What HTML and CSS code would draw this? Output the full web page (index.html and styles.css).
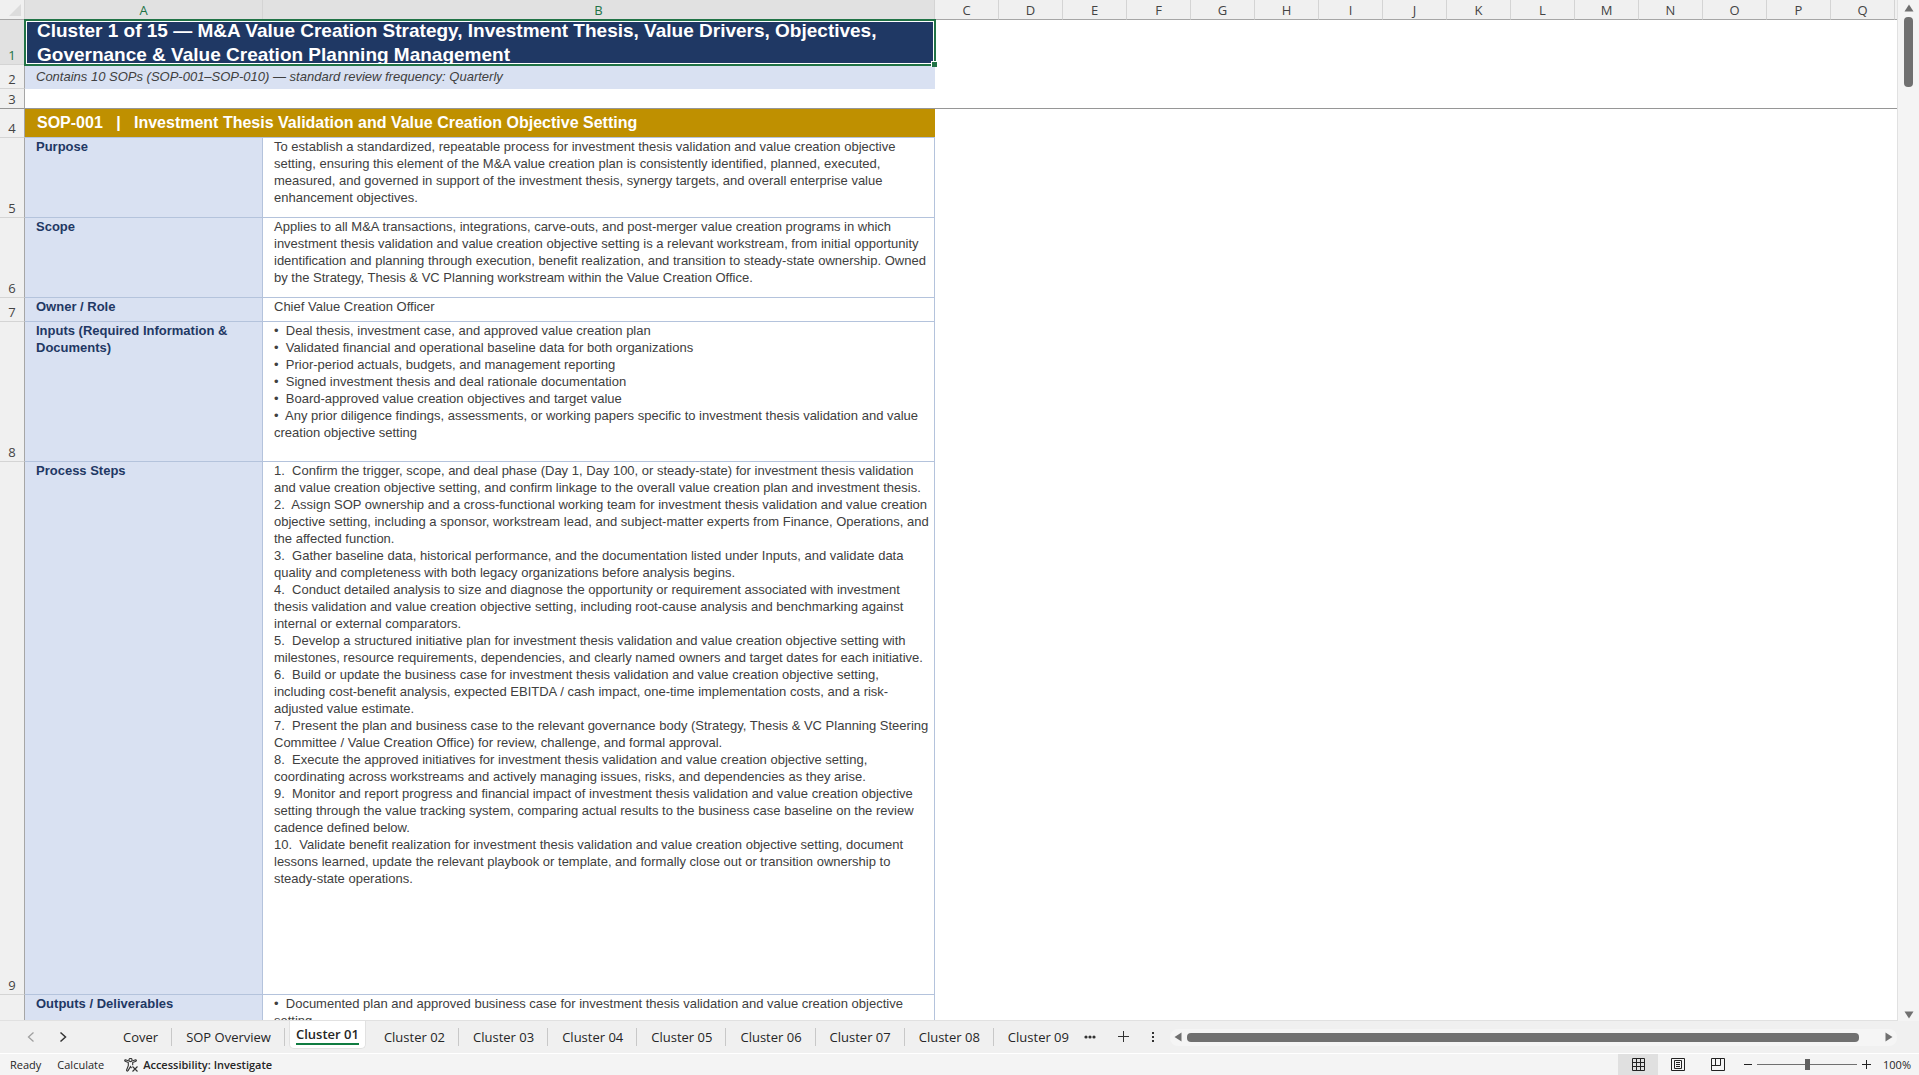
FILE: index.html
```
<!DOCTYPE html>
<html lang="en">
<head>
    <meta charset="UTF-8">
    <meta name="viewport" content="width=device-width, initial-scale=1.0">
    <title>Cluster 01</title>
    <link rel="stylesheet" href="styles.css">
</head>
<body>
    <main class="workspace">
        <div class="sheet">
            <table>
                <colgroup>
                    <col class="col-rownum">
                    <col class="col-a">
                    <col class="col-b">
                    <col class="col-std" span="15">
                    <col>
                </colgroup>
                <thead>
                    <tr>
                        <th class="corner"><svg width="12" height="12" viewBox="0 0 12 12"><path d="M12 0v12H0z" fill="#dcdcdc"/></svg></th>
                        <th class="active">A</th>
                        <th class="active">B</th>
                        <th>C</th>
                        <th>D</th>
                        <th>E</th>
                        <th>F</th>
                        <th>G</th>
                        <th>H</th>
                        <th>I</th>
                        <th>J</th>
                        <th>K</th>
                        <th>L</th>
                        <th>M</th>
                        <th>N</th>
                        <th>O</th>
                        <th>P</th>
                        <th>Q</th>
                        <th class="last"></th>
                    </tr>
                </thead>
                <tbody>
                    <tr class="row-title">
                        <th class="active">1</th>
                        <td colspan="2" class="title">
                            <div class="clip">Cluster 1 of 15 — M&amp;A Value Creation Strategy, Investment Thesis, Value Drivers, Objectives, Governance &amp; Value Creation Planning Management</div>
                            <span class="handle"></span>
                        </td>
                        <td colspan="16"></td>
                    </tr>
                    <tr class="row-subtitle">
                        <th>2</th>
                        <td colspan="2" class="subtitle">Contains 10 SOPs (SOP-001–SOP-010) — standard review frequency: Quarterly</td>
                        <td colspan="16"></td>
                    </tr>
                    <tr class="row-blank frozen">
                        <th>3</th>
                        <td colspan="18"></td>
                    </tr>
                    <tr class="row-sop">
                        <th>4</th>
                        <td colspan="2" class="sop">SOP-001 &nbsp; | &nbsp; Investment Thesis Validation and Value Creation Objective Setting</td>
                        <td colspan="16"></td>
                    </tr>
                    <tr class="row-text">
                        <th>5</th>
                        <td class="label">Purpose</td>
                        <td class="text">To establish a standardized, repeatable process for investment thesis validation and value creation objective setting, ensuring this element of the M&amp;A value creation plan is consistently identified, planned, executed, measured, and governed in support of the investment thesis, synergy targets, and overall enterprise value enhancement objectives.</td>
                        <td colspan="16"></td>
                    </tr>
                    <tr class="row-text">
                        <th>6</th>
                        <td class="label">Scope</td>
                        <td class="text">Applies to all M&amp;A transactions, integrations, carve-outs, and post-merger value creation programs in which investment thesis validation and value creation objective setting is a relevant workstream, from initial opportunity identification and planning through execution, benefit realization, and transition to steady-state ownership. Owned by the Strategy, Thesis &amp; VC Planning workstream within the Value Creation Office.</td>
                        <td colspan="16"></td>
                    </tr>
                    <tr class="row-single">
                        <th>7</th>
                        <td class="label">Owner / Role</td>
                        <td class="text">Chief Value Creation Officer</td>
                        <td colspan="16"></td>
                    </tr>
                    <tr class="row-inputs">
                        <th>8</th>
                        <td class="label">Inputs (Required Information &amp; Documents)</td>
                        <td class="text">
                            <p>•&nbsp; Deal thesis, investment case, and approved value creation plan</p>
                            <p>•&nbsp; Validated financial and operational baseline data for both organizations</p>
                            <p>•&nbsp; Prior-period actuals, budgets, and management reporting</p>
                            <p>•&nbsp; Signed investment thesis and deal rationale documentation</p>
                            <p>•&nbsp; Board-approved value creation objectives and target value</p>
                            <p>•&nbsp; Any prior diligence findings, assessments, or working papers specific to investment thesis validation and value creation objective setting</p>
                        </td>
                        <td colspan="16"></td>
                    </tr>
                    <tr class="row-steps">
                        <th>9</th>
                        <td class="label">Process Steps</td>
                        <td class="text">
                            <p>1.&nbsp; Confirm the trigger, scope, and deal phase (Day 1, Day 100, or steady-state) for investment thesis validation and value creation objective setting, and confirm linkage to the overall value creation plan and investment thesis.</p>
                            <p>2.&nbsp; Assign SOP ownership and a cross-functional working team for investment thesis validation and value creation objective setting, including a sponsor, workstream lead, and subject-matter experts from Finance, Operations, and the affected function.</p>
                            <p>3.&nbsp; Gather baseline data, historical performance, and the documentation listed under Inputs, and validate data quality and completeness with both legacy organizations before analysis begins.</p>
                            <p>4.&nbsp; Conduct detailed analysis to size and diagnose the opportunity or requirement associated with investment thesis validation and value creation objective setting, including root-cause analysis and benchmarking against internal or external comparators.</p>
                            <p>5.&nbsp; Develop a structured initiative plan for investment thesis validation and value creation objective setting with milestones, resource requirements, dependencies, and clearly named owners and target dates for each initiative.</p>
                            <p>6.&nbsp; Build or update the business case for investment thesis validation and value creation objective setting, including cost-benefit analysis, expected EBITDA / cash impact, one-time implementation costs, and a risk-adjusted value estimate.</p>
                            <p>7.&nbsp; Present the plan and business case to the relevant governance body (Strategy, Thesis &amp; VC Planning Steering Committee / Value Creation Office) for review, challenge, and formal approval.</p>
                            <p>8.&nbsp; Execute the approved initiatives for investment thesis validation and value creation objective setting, coordinating across workstreams and actively managing issues, risks, and dependencies as they arise.</p>
                            <p>9.&nbsp; Monitor and report progress and financial impact of investment thesis validation and value creation objective setting through the value tracking system, comparing actual results to the business case baseline on the review cadence defined below.</p>
                            <p>10.&nbsp; Validate benefit realization for investment thesis validation and value creation objective setting, document lessons learned, update the relevant playbook or template, and formally close out or transition ownership to steady-state operations.</p>
                        </td>
                        <td colspan="16"></td>
                    </tr>
                    <tr class="row-outputs">
                        <th></th>
                        <td class="label">Outputs / Deliverables</td>
                        <td class="text">
                            <p>•&nbsp; Documented plan and approved business case for investment thesis validation and value creation objective setting</p>
                        </td>
                        <td colspan="16"></td>
                    </tr>
                </tbody>
            </table>
        </div>
        <div class="vscroll">
            <button aria-label="Scroll up"><svg width="10" height="8" viewBox="0 0 10 8"><path d="M5 0.5L9.5 7.5H0.5z" fill="#707070"/></svg></button>
            <div class="vtrack"><div class="vthumb"></div></div>
            <button aria-label="Scroll down"><svg width="10" height="8" viewBox="0 0 10 8"><path d="M0.5 0.5h9L5 7.5z" fill="#707070"/></svg></button>
        </div>
    </main>

    <nav class="tabbar">
        <div class="tab-arrows">
            <button aria-label="Previous sheet"><svg width="8" height="12" viewBox="0 0 8 12"><path d="M6.5 1.5L1.5 6l5 4.5" fill="none" stroke="#a0a0a0" stroke-width="1.3"/></svg></button>
            <button aria-label="Next sheet"><svg width="8" height="12" viewBox="0 0 8 12"><path d="M1.5 1.5l5 4.5-5 4.5" fill="none" stroke="#333" stroke-width="1.5"/></svg></button>
        </div>
        <div class="tabs">
            <button class="tab">Cover</button>
            <button class="tab">SOP Overview</button>
            <button class="tab current"><span>Cluster 01</span></button>
            <button class="tab">Cluster 02</button>
            <button class="tab">Cluster 03</button>
            <button class="tab">Cluster 04</button>
            <button class="tab">Cluster 05</button>
            <button class="tab">Cluster 06</button>
            <button class="tab">Cluster 07</button>
            <button class="tab">Cluster 08</button>
            <button class="tab">Cluster 09</button>
        </div>
        <div class="tab-tools">
            <button aria-label="More sheets"><svg width="12" height="4" viewBox="0 0 12 4"><g fill="#333"><circle cx="2" cy="2" r="1.6"/><circle cx="6" cy="2" r="1.6"/><circle cx="10" cy="2" r="1.6"/></g></svg></button>
            <button aria-label="New sheet"><svg width="12" height="12" viewBox="0 0 12 12"><path d="M5.5 0v11M0 5.5h11" stroke="#333" stroke-width="1"/></svg></button>
            <button aria-label="Resize"><svg width="2" height="10" viewBox="0 0 2 10"><path d="M0 0h2v2H0zM0 4h2v2H0zM0 8h2v2H0z" fill="#333"/></svg></button>
        </div>
        <div class="hscroll">
            <button aria-label="Scroll left"><svg width="8" height="10" viewBox="0 0 8 10"><path d="M7.5 0.5v9L0.5 5z" fill="#707070"/></svg></button>
            <div class="htrack"><div class="hthumb"></div></div>
            <button aria-label="Scroll right"><svg width="8" height="10" viewBox="0 0 8 10"><path d="M0.5 0.5v9L7.5 5z" fill="#707070"/></svg></button>
        </div>
    </nav>

    <footer class="statusbar">
        <span>Ready</span>
        <span>Calculate</span>
        <button class="access">
            <svg width="15" height="14" viewBox="0 0 15 14" fill="none" stroke="#333" stroke-width="1.1"><circle cx="6.5" cy="2" r="1.6"/><path d="M4.8 3L1.5 1.8C.6 1.7.4 2.9 1.2 3.2L4.3 4.6v3L2.6 12c-.2 1 1 1.5 1.5.6L6.5 8.5l1 1.6M8.3 3l3.2-1.2c1-.1 1.2 1.1.4 1.4L8.7 4.6v2.6M8.500 8.500l5 5M13.500 8.500l-5 5"/></svg>
            Accessibility: Investigate
        </button>
        <div class="view-tools">
            <div class="views">
                <button class="view selected" aria-label="Normal"><svg width="13" height="13" viewBox="0 0 13 13"><path d="M.5.5h12v12H.5zM4.5.5v12M8.5.5v12M.5 4.5h12M.5 8.5h12" fill="none" stroke="#222"/></svg></button>
                <button class="view" aria-label="Page layout"><svg width="14" height="13" viewBox="0 0 14 13"><path d="M.5.5h13v12H.5zM3.5 2.5h7v8h-7zM5 4.5h4M5 6.5h4M5 8.5h4" fill="none" stroke="#222"/></svg></button>
                <button class="view" aria-label="Page break preview"><svg width="14" height="13" viewBox="0 0 14 13"><path d="M.5.5h13v12H.5zM.5 7.5h9M4.5.5v7M9.5.5v7" fill="none" stroke="#222"/></svg></button>
            </div>
            <div class="zoom">
                <button aria-label="Zoom out"><svg width="8" height="9" viewBox="0 0 8 9"><path d="M0 4.5h8" stroke="#222"/></svg></button>
                <input type="range" aria-label="Zoom" min="0" max="200" value="100">
                <button aria-label="Zoom in"><svg width="9" height="9" viewBox="0 0 9 9"><path d="M0 4.5h9M4.5 0v9" stroke="#222"/></svg></button>
            </div>
            <button class="percent">100%</button>
        </div>
    </footer>
</body>
</html>
```
FILE: styles.css
```
* {
    box-sizing: border-box;
    margin: 0;
    padding: 0;
}

body {
    display: flex;
    flex-direction: column;
    height: 100vh;
    overflow: hidden;
    background-color: #fff;
    font-family: "Open Sans", "Noto Sans", sans-serif;
}

button {
    display: flex;
    align-items: center;
    justify-content: center;
    border: none;
    background: none;
    color: #262626;
    font: inherit;
    white-space: nowrap;
}

svg {
    display: block;
    flex: none;
}

/* Worksheet */
.workspace {
    display: flex;
    flex: 1;
    min-height: 0;
}

.sheet {
    flex: 1;
    min-width: 0;
    overflow: hidden;
    border-bottom: 1px solid #e1e1e1;
}

table {
    width: 100%;
    table-layout: fixed;
    border-collapse: separate;
    border-spacing: 0;
}

.col-rownum {
    width: 25px;
}

.col-a {
    width: 238px;
}

.col-b {
    width: 672px;
}

.col-std {
    width: 64px;
}

th {
    background-color: #f0f0f0;
    color: #444;
    font-size: 13px;
    font-weight: normal;
    line-height: 18px;
}

thead th {
    height: 20px;
    border-right: 1px solid #d4d4d4;
    border-bottom: 1px solid #a6a6a6;
}

thead .last {
    border-right: none;
}

tbody th {
    border-right: 1px solid #a6a6a6;
    border-bottom: 1px solid #d4d4d4;
    vertical-align: bottom;
}

th.active {
    background-color: #e1e1e1;
    color: #217346;
}

.corner svg {
    margin-left: 9px;
}

td {
    vertical-align: top;
    font-family: "Liberation Sans", Arial, sans-serif;
    font-size: 13px;
    line-height: 17px;
    color: #404040;
}

.row-title { height: 45px; }
.row-subtitle { height: 24px; }
.row-blank { height: 20px; }
.row-sop { height: 29px; }
.row-text { height: 80px; }
.row-single { height: 24px; }
.row-inputs { height: 140px; }
.row-steps { height: 533px; }
.row-outputs { height: 80px; }

.frozen th,
.frozen td {
    border-bottom: 1px solid #969696;
}

/* Selected cell */
.title {
    position: relative;
    background-color: #1f3864;
    outline: 2px solid #217346;
    outline-offset: -1px;
    box-shadow: inset 0 0 0 2px #fff;
}

.clip {
    display: flex;
    align-items: center;
    height: 44px;
    padding: 1px 0 0 12px;
    overflow: hidden;
    color: #fff;
    font-size: 19px;
    font-weight: bold;
    line-height: 24px;
}

.handle {
    position: absolute;
    right: -2px;
    bottom: -2px;
    width: 6px;
    height: 6px;
    border-top: 1px solid #fff;
    border-left: 1px solid #fff;
    background-color: #217346;
}

.subtitle {
    padding: 3px 11px;
    background-color: #d9e1f2;
    font-style: italic;
}

.sop {
    padding: 0 12px 2px;
    border-bottom: 1px solid #b4c3dc;
    background-color: #bf9000;
    color: #fff;
    font-size: 16px;
    font-weight: bold;
    vertical-align: middle;
}

.label,
.text {
    border-right: 1px solid #b4c3dc;
    border-bottom: 1px solid #b4c3dc;
}

.label {
    padding: 0 11px;
    background-color: #d9e1f2;
    color: #1f3864;
    font-weight: bold;
}

.text {
    padding: 0 3px 0 11px;
}

/* Scrollbars */
.vscroll {
    display: flex;
    flex-direction: column;
    align-items: center;
    gap: 5px;
    width: 22px;
    padding: 4px 0 2px;
    border-left: 1px solid #e1e1e1;
    background-color: #f4f4f4;
}

.vtrack {
    flex: 1;
}

.vthumb {
    width: 9px;
    height: 70px;
    border-radius: 4px;
    background-color: #707070;
}

.hscroll {
    display: flex;
    flex: 1;
    align-items: center;
    gap: 5px;
    height: 17px;
    margin-right: 22px;
    padding: 0 4px;
    border-radius: 8px;
    background-color: #f5f5f5;
}

.htrack {
    flex: 1;
}

.hthumb {
    width: 97%;
    height: 9px;
    border-radius: 4px;
    background-color: #707070;
}

/* Sheet tabs */
.tabbar {
    display: flex;
    align-items: center;
    height: 32px;
    background-color: #f0f0f0;
}

.tab-arrows {
    display: flex;
    gap: 24px;
    width: 109px;
    padding-left: 27px;
}

.tabs {
    display: flex;
    align-self: stretch;
    align-items: center;
}

.tab {
    height: 18px;
    padding: 0 13px 0 14px;
    border-right: 1px solid #c8c8c8;
    font-size: 13px;
    line-height: 18px;
}

.tab:last-child {
    border-right: none;
}

.current {
    align-self: flex-start;
    height: 28px;
    margin: 0 4px;
    padding: 0 6px;
    border: 1px solid #e1e1e1;
    border-top: none;
    border-radius: 0 0 5px 5px;
    background-color: #fff;
    font-weight: 600;
}

.current span {
    border-bottom: 2px solid #107c41;
}

.tab-tools {
    display: flex;
    align-items: center;
    gap: 22px;
    padding: 0 16px 0 2px;
}

/* Status bar */
.statusbar {
    display: flex;
    align-items: center;
    gap: 16px;
    height: 22px;
    padding: 0 8px 0 10px;
    border-top: 1px solid #fff;
    background-color: #f4f4f4;
    color: #262626;
    font-size: 11px;
}

.access {
    gap: 4px;
    margin-left: 4px;
    font-weight: 600;
}

.view-tools {
    display: flex;
    align-self: stretch;
    margin-left: auto;
}

.views {
    display: flex;
}

.view {
    width: 40px;
}

.selected {
    background-color: #e0e0e0;
}

.zoom {
    display: flex;
    align-items: center;
    gap: 5px;
    padding: 0 12px 0 6px;
}

.zoom input {
    width: 100px;
    height: 11px;
    appearance: none;
    background: linear-gradient(#707070, #707070) center / 100% 1px no-repeat;
}

.zoom input::-webkit-slider-thumb {
    appearance: none;
    width: 5px;
    height: 11px;
    background-color: #606060;
}
```
